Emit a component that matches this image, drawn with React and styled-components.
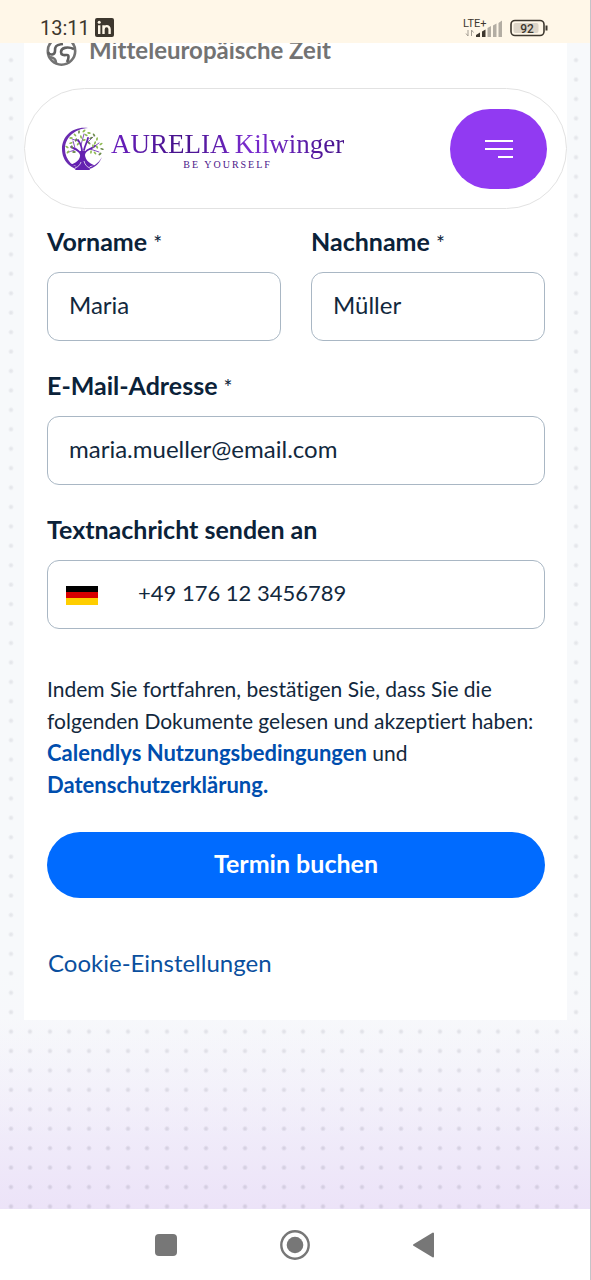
import React from "react";
import styled, { createGlobalStyle } from "styled-components";

const GlobalStyle = createGlobalStyle`
  *, *::before, *::after { box-sizing: border-box; }
  body {
    margin: 0;
    background: #fff;
    color: #0a2540;
    font-family: Lato, "Open Sans", sans-serif;
    font-variant-ligatures: none;
  }
`;

const Screen = styled.div`
  min-height: 100vh;
  display: flex;
  flex-direction: column;
  border-right: 1px solid #c4c4c8;
`;

const StatusBar = styled.div`
  height: 43px;
  padding: 12px 42px 0 40px;
  display: flex;
  align-items: center;
  justify-content: space-between;
  background: #fff7e8;
  color: #3d372e;
  font-family: Roboto, sans-serif;
`;

const StatusGroup = styled.div`
  display: flex;
  align-items: center;
  gap: ${(p) => p.$gap}px;
`;

const Clock = styled.span`
  font-size: 20px;
  line-height: 24px;
`;

const Backdrop = styled.main`
  flex: 1;
  padding: 0 23px 189px 24px;
  background-color: #f7f9fb;
  background-image:
    linear-gradient(to top, #f7f9fb00 0, #f7f9fb00 60px, #f7f9fb50 240px),
    radial-gradient(circle at 11px 44%, #50506428 1px, transparent 3px),
    radial-gradient(circle at 30px 44%, #50506428 1px, transparent 3px),
    radial-gradient(circle at 11px 94%, #50506428 1px, transparent 3px),
    radial-gradient(circle at 30px 94%, #50506428 1px, transparent 3px),
    linear-gradient(to top, #ece3f8 0, #f1edfa 90px, #f7f8fb 190px, #f7f9fb 240px);
  background-size: 100% 100%, 39px 39px, 39px 39px, 39px 39px, 39px 39px, 100% 100%;
  background-repeat: no-repeat, repeat round, repeat round, repeat round, repeat round, no-repeat;
`;

const Card = styled.div`
  background: #fff;
  padding-bottom: 40px;
`;

const TimeZone = styled.div`
  height: 24px;
  margin-bottom: 21px;
  padding-left: 22px;
  overflow: hidden;
  display: flex;
  align-items: flex-end;
  gap: 11px;
  color: #737373;
  font-size: 24px;
  font-weight: 700;
  line-height: 34px;
`;

const SiteHeader = styled.header`
  height: 121px;
  padding: 0 19px 0 36px;
  display: flex;
  align-items: center;
  justify-content: space-between;
  border: 1px solid #e2e2e2;
  border-radius: 61px;
  background: #fff;
`;

const Brand = styled.a`
  display: flex;
  align-items: center;
  gap: 7px;
  color: #4b1589;
  text-decoration: none;
  font-family: "Liberation Serif", serif;
`;

const BrandText = styled.span`
  display: flex;
  flex-direction: column;
  align-items: center;
`;

const BrandName = styled.span`
  padding-top: 3px;
  font-size: 27px;
  line-height: 30px;
  white-space: nowrap;
  background: linear-gradient(90deg, #6b1fc0, #45128a 30%, #7a2bd0 60%, #45128a);
  background-clip: text;
  color: transparent;
`;

const BrandTag = styled.span`
  font-size: 10px;
  line-height: 12px;
  letter-spacing: 2px;
`;

const MenuButton = styled.button`
  width: 97px;
  height: 80px;
  padding: 0;
  display: grid;
  place-items: center;
  border: 0;
  border-radius: 40px;
  background: #913af2;
`;

const Form = styled.form`
  padding: 16px 22px 0 23px;
`;

const FieldRow = styled.div`
  display: grid;
  grid-template-columns: 1fr 1fr;
  gap: 30px;
`;

const Field = styled.div`
  min-width: 0;
  margin-bottom: 28px;
`;

const Label = styled.label`
  display: block;
  margin-bottom: 15px;
  color: #0b2239;
  font-size: 25px;
  font-weight: 700;
  line-height: 32px;
`;

const Required = styled.span`
  font-size: 21px;
  font-weight: 400;
  line-height: 24px;
`;

const InputBox = styled.div`
  height: 69px;
  padding: 0 ${(p) => (p.$flag ? 18 : 21)}px;
  display: flex;
  align-items: center;
  gap: 40px;
  border: 1px solid #a9b7c4;
  border-radius: 12px;
  background: #fff;
`;

const Input = styled.input`
  flex: 1;
  min-width: 0;
  padding: 0 0 3px;
  border: 0;
  outline: 0;
  background: transparent;
  color: #12283d;
  font: 400 24px/32px Lato, "Open Sans", sans-serif;
  font-size: ${(p) => (p.type === "tel" ? 22 : 24)}px;
`;

const Terms = styled.p`
  margin: 0;
  padding-top: 16px;
  color: #12283d;
  font-size: 21px;
  line-height: 32px;
`;

const TermsLink = styled.a`
  color: #004eae;
  font-size: 22px;
  line-height: 30px;
  font-weight: 700;
  text-decoration: none;
`;

const SubmitButton = styled.button`
  display: block;
  width: 100%;
  height: 66px;
  margin: 31px 0 48px;
  padding: 0 0 4px;
  border: 0;
  border-radius: 33px;
  background: #006bff;
  color: #fff;
  font: 700 25px/32px Lato, "Open Sans", sans-serif;
`;

const CookieLink = styled.a`
  display: block;
  padding-left: 1px;
  color: #0a4f9e;
  font-size: 24px;
  line-height: 34px;
  text-decoration: none;
`;

const NavBar = styled.nav`
  height: 71px;
  display: flex;
  align-items: center;
  justify-content: center;
  gap: 97px;
  background: #fff;
`;

const NavButton = styled.button`
  width: 32px;
  height: 32px;
  padding: 0;
  border: 0;
  background: none;
`;

const LinkedInGlyph = () => (
  <svg width="19" height="19" viewBox="0 0 19 19" aria-label="LinkedIn">
    <rect width="19" height="19" rx="2" fill="#3d372e" />
    <g stroke="#fff7e8" fill="none" strokeWidth="2.4">
      <path d="M4.2 7.2V16M8.5 7.2V16M8.5 11.5C8.5 7.2 14.6 6.8 14.6 11.2V16" />
    </g>
    <circle cx="4.2" cy="4.2" r="1.5" fill="#fff7e8" />
  </svg>
);

const SignalGlyph = () => (
  <svg width="40" height="20" viewBox="0 0 40 20" aria-hidden="true">
    <text x="0" y="9" fontSize="11" fill="#3d372e" fontFamily="Roboto, sans-serif">LTE+</text>
    <g fill="none" stroke="#a39d93" strokeWidth="1">
      <path d="M5 12V18M3 15.5L5 18M8.500 18V12L10.500 14.500" />
    </g>
    <g fill="#3d372e">
      <path d="M13 17L17 14.500V19H13ZM19 13.500L22.500 11.500V19H19Z" />
    </g>
    <path fill="#b3ada3" d="M24.500 10L28 8V19H24.500ZM30 7.500L33.500 5.500V19H30ZM35.500 5L39 2.500V19H35.500Z" />
  </svg>
);

const BatteryGlyph = () => (
  <svg width="38" height="18" viewBox="0 0 38 18" aria-label="Akku 92">
    <rect x="1" y="1.500" width="33" height="15" rx="4" fill="none" stroke="#3d372e" strokeWidth="1.600" />
    <rect x="3.500" y="4" width="25" height="10" rx="2" fill="#ddd5c8" />
    <path d="M36.500 6.500V11.500" stroke="#3d372e" strokeWidth="2" />
    <text x="17" y="13.500" textAnchor="middle" fontSize="12" fontWeight="500" fill="#3d372e" fontFamily="Roboto, sans-serif">92</text>
  </svg>
);

const GlobeGlyph = () => (
  <svg width="32" height="32" viewBox="0 0 32 32" fill="none" stroke="#737373" strokeWidth="2.600" aria-hidden="true">
    <circle cx="15.500" cy="16" r="13.700" />
    <path d="M2 17C4 21 9 20 9 16S9 10 17 9" stroke="#606060" />
    <path d="M28 14C21 11 15 13 15 17S19 20 21 20S23 23 21 27" stroke="#606060" />
    <path d="M4 22C8 23 10 24 10 28" />
  </svg>
);

const LEAVES = [
  [10, 11], [14, 8], [18, 5], [23, 4], [28, 6], [33, 8], [36, 12], [40, 17], [41, 22],
  [36, 20], [34, 16], [30, 11], [25, 8], [20, 10], [15, 13], [10, 16], [6, 20], [11, 20],
  [17, 17], [23, 13], [28, 16], [32, 19], [7, 25], [13, 25], [34, 26], [30, 25], [39, 27],
];

const TreeLogo = () => (
  <svg width="43" height="44" viewBox="0 0 43 44" aria-hidden="true">
    <path
      d="M27 1C12 -1 1 9 1 22C1 34 10 43 22 43C31 43 38 38 41 30C37 37 31 41 23 41C12 41 4 33 4 22C4 11 13 2 27 1Z"
      fill="#6a2bb0"
    />
    <path
      d="M19 24C20 31 18 35 9 38C15 38 17 39 14 43H29C27 39 30 38 35 39C27 36 23 32 24 24Z"
      fill="#6421b0"
    />
    <g fill="none" stroke="#6421b0" strokeLinecap="round">
      <path strokeWidth="1.800" d="M20 28C19 23 14 22 10 20M23 28C24 22 29 23 34 19M21 25C21 20 20 17 17 13M23 23C24 18 26 16 27 11" />
      <path strokeWidth="0.800" d="M15 22C12 24 10 24 8 25M14 21L12 14M20 18L23 7M26 16L32 10M29 22L38 25M31 21L38 16M17 14L11 12" />
    </g>
    <path d="M14 41C17 40 19 38 20 35M29 41C26 40 24 38 23 34" fill="none" stroke="#fff" strokeWidth="0.700" />
    {LEAVES.map(([x, y], i) => (
      <ellipse
        key={i}
        cx={x}
        cy={y}
        rx="1.800"
        ry="0.900"
        transform={`rotate(${(i * 47) % 180} ${x} ${y})`}
        fill={i % 3 === 2 ? "#6b8a4a" : "#8fba52"}
      />
    ))}
  </svg>
);

const MenuGlyph = () => (
  <svg width="28" height="20" viewBox="0 0 28 20" stroke="#fff" strokeWidth="2" aria-hidden="true">
    <path d="M0 2H28M0 10H28M13 18H28" />
  </svg>
);

const FlagGermany = () => (
  <svg width="32" height="20" viewBox="0 0 32 20" aria-label="Deutschland">
    <rect y="1" width="32" height="7" fill="#000" />
    <rect y="7" width="32" height="6" fill="#d80000" />
    <rect y="13" width="32" height="7" fill="#ffce00" />
  </svg>
);

const TextField = ({ id, label, required, flag, ...input }) => (
  <Field>
    <Label htmlFor={id}>
      {label} {required && <Required>*</Required>}
    </Label>
    <InputBox $flag={flag}>
      {flag && <FlagGermany />}
      <Input id={id} {...input} />
    </InputBox>
  </Field>
);

export default function App() {
  return (
    <>
      <GlobalStyle />
      <Screen>
        <StatusBar>
          <StatusGroup $gap={5}>
            <Clock>13:11</Clock>
            <LinkedInGlyph />
          </StatusGroup>
          <StatusGroup $gap={7}>
            <SignalGlyph />
            <BatteryGlyph />
          </StatusGroup>
        </StatusBar>
        <Backdrop>
          <Card>
            <TimeZone>
              <GlobeGlyph />
              <span>Mitteleuropäische Zeit</span>
            </TimeZone>
            <SiteHeader>
              <Brand href="#">
                <TreeLogo />
                <BrandText>
                  <BrandName>AURELIA Kilwinger</BrandName>
                  <BrandTag>BE YOURSELF</BrandTag>
                </BrandText>
              </Brand>
              <MenuButton type="button" aria-label="Menü">
                <MenuGlyph />
              </MenuButton>
            </SiteHeader>
            <Form onSubmit={(e) => e.preventDefault()}>
              <FieldRow>
                <TextField id="vorname" label="Vorname" required defaultValue="Maria" />
                <TextField id="nachname" label="Nachname" required defaultValue="Müller" />
              </FieldRow>
              <TextField id="email" type="email" label="E-Mail-Adresse" required defaultValue="maria.mueller@email.com" />
              <TextField id="telefon" type="tel" label="Textnachricht senden an" flag defaultValue="+49 176 12 3456789" />
              <Terms>
                Indem Sie fortfahren, bestätigen Sie, dass Sie die folgenden Dokumente gelesen und akzeptiert haben:{" "}
                <TermsLink href="#">Calendlys Nutzungsbedingungen</TermsLink> und{" "}
                <TermsLink href="#">Datenschutzerklärung.</TermsLink>
              </Terms>
              <SubmitButton type="submit">Termin buchen</SubmitButton>
              <CookieLink href="#">Cookie-Einstellungen</CookieLink>
            </Form>
          </Card>
        </Backdrop>
        <NavBar>
          <NavButton type="button" aria-label="Übersicht">
            <svg width="32" height="32" viewBox="0 0 32 32">
              <rect x="5" y="5" width="22" height="22" rx="4" fill="#777" />
            </svg>
          </NavButton>
          <NavButton type="button" aria-label="Startseite">
            <svg width="32" height="32" viewBox="0 0 32 32">
              <circle cx="16" cy="16" r="13.700" fill="none" stroke="#777" strokeWidth="2.400" />
              <circle cx="16" cy="16" r="8.300" fill="#777" />
            </svg>
          </NavButton>
          <NavButton type="button" aria-label="Zurück">
            <svg width="32" height="32" viewBox="0 0 32 32">
              <path d="M6 16L25 4.500V27.500Z" fill="#777" stroke="#777" strokeWidth="2" strokeLinejoin="round" />
            </svg>
          </NavButton>
        </NavBar>
      </Screen>
    </>
  );
}
